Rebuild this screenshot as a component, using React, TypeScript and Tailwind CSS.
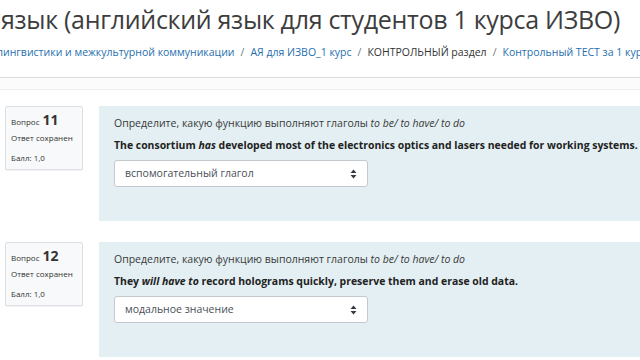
import { ReactNode } from "react";

function SelectArrows() {
  return (
    <svg width="7" height="10" viewBox="0 0 7 10" className="shrink-0">
      <path d="M3.5 0.5 L6.5 4 H0.5 Z" fill="#343a40" />
      <path d="M3.5 9.5 L6.5 6 H0.5 Z" fill="#343a40" />
    </svg>
  );
}

function Question({
  num,
  answer,
  sentence,
}: {
  num: number;
  answer: string;
  sentence: ReactNode;
}) {
  return (
    <div className="flex items-start h-[115px]">
      {/* Info block */}
      <div className="ml-[5px] w-[78px] h-[64px] shrink-0 bg-[#f8f9fa] border border-[#dcdfe3] rounded-[2px] shadow-[0_1px_1px_rgba(0,0,0,0.05)] pl-[5px] pt-[6px] text-[#333]">
        <div className="flex items-baseline gap-[3px] leading-none">
          <span className="text-[8px]">Вопрос</span>
          <span className="text-[14px] font-bold">{num}</span>
        </div>
        <div className="text-[8px] leading-none mt-[7px]">Ответ сохранен</div>
        <div className="text-[8px] leading-none mt-[12px]">Балл: 1,0</div>
      </div>

      {/* Formulation */}
      <div className="ml-[16px] flex-1 h-[115px] bg-[#e3eff2] pl-[15px] pt-[11px] text-[#333] overflow-hidden">
        <p className="text-[10.5px] leading-[12px] whitespace-nowrap text-[#3a3a3a]">
          Определите, какую функцию выполняют глаголы <i>to be/ to have/ to do</i>
        </p>
        <p className="mt-[10px] text-[10.45px] leading-[12px] font-bold whitespace-nowrap text-[#222]">
          {sentence}
        </p>
        <div className="mt-[9px] w-[254px] h-[27px] bg-white border border-[#c4c9ce] rounded-[3px] flex items-center justify-between pl-[10px] pr-[10px] text-[10.5px] text-[#495057]">
          <span>{answer}</span>
          <SelectArrows />
        </div>
      </div>
    </div>
  );
}

export default function App() {
  return (
    <div className="w-[640px] h-[360px] overflow-hidden bg-white font-['Open_Sans',sans-serif]">
      {/* Page header */}
      <div className="pt-[2px] h-[77px]">
        <h1 className="text-[25px] tracking-[-0.3px] leading-[34px] text-[#3d3d3d] whitespace-nowrap pl-[1px]">
          язык (английский язык для студентов 1 курса ИЗВО)
        </h1>
        <nav className="mt-[9px] -ml-[3px] text-[10.5px] leading-[14px] whitespace-nowrap">
          <a className="text-[#1f6fae]">лингвистики и межкультурной коммуникации</a>
          <span className="text-[#6c757d] px-[6px]">/</span>
          <a className="text-[#1f6fae]">АЯ для ИЗВО_1 курс</a>
          <span className="text-[#6c757d] px-[6px]">/</span>
          <span className="text-[#333]">КОНТРОЛЬНЫЙ раздел</span>
          <span className="text-[#6c757d] px-[6px]">/</span>
          <a className="text-[#1f6fae]">Контрольный ТЕСТ за 1 курс</a>
        </nav>
      </div>

      <div className="border-t border-[#dcdcdc] h-[13px] bg-[#fbfbfb] border-b border-b-[#efefef]" />

      <div className="pt-[16px] flex flex-col gap-[21px]">
        <Question
          num={11}
          answer="вспомогательный глагол"
          sentence={
            <>
              The consortium <i>has</i> developed most of the electronics optics and lasers needed for working systems.
            </>
          }
        />
        <Question
          num={12}
          answer="модальное значение"
          sentence={
            <>
              They <i>will have to</i> record holograms quickly, preserve them and erase old data.
            </>
          }
        />
      </div>
    </div>
  );
}
